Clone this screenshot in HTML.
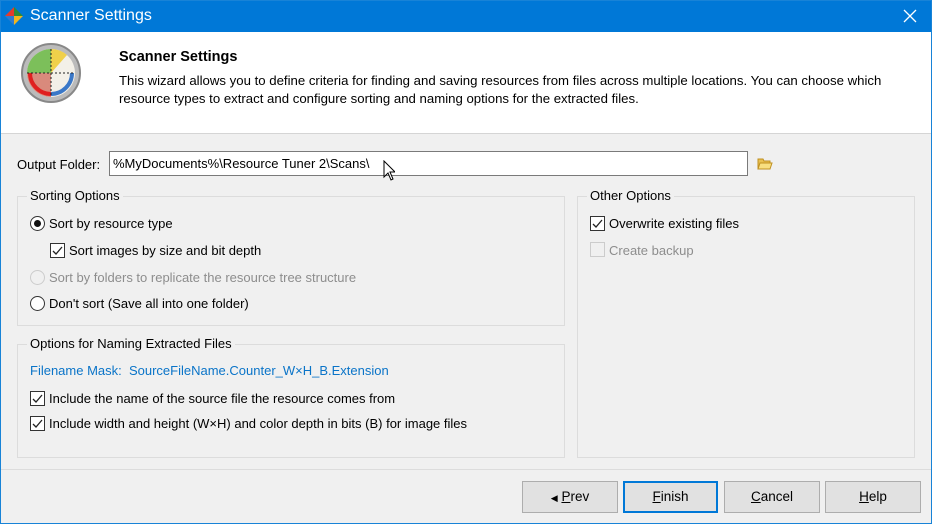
<!DOCTYPE html>
<html><head><style>
*{box-sizing:border-box;margin:0;padding:0}
body{width:932px;height:524px;background:#f0f0f0;font-family:"Liberation Sans",sans-serif;font-size:13px;color:#000;position:relative;overflow:hidden}
.a{position:absolute;white-space:nowrap}
.win{position:absolute;left:0;top:0;width:932px;height:524px;border:1px solid #1883d7}
.title{position:absolute;left:0;top:0;width:932px;height:32px;background:#0078d7;color:#fff;font-size:16px}
.hdr{position:absolute;left:1px;top:32px;width:930px;height:102px;background:#fff;border-bottom:1px solid #d5d5d5}
.grp{position:absolute;border:1px solid #dcdcdc}
.gl{position:absolute;background:#f0f0f0;padding:0 3px;top:-9px;left:9px}
.cb{position:absolute;width:15px;height:15px;border:1px solid #333;background:#fff}
.cb svg{position:absolute;left:1px;top:1px}
.rb{position:absolute;width:15px;height:15px;border:1px solid #333;border-radius:50%;background:#fff}
.btn{position:absolute;top:481px;height:32px;border:1px solid #adadad;background:#e1e1e1;text-align:center;line-height:30px;font-size:13.5px}
</style></head><body>
<div class="title">
<svg class="a" style="left:5px;top:7px" width="18" height="18" viewBox="0 0 18 18"><path d="M9 0L0 9h9z" fill="#e53a2c"/><path d="M9 0l9 9H9z" fill="#2e8b3a"/><path d="M0 9l9 9V9z" fill="#2f7ad0"/><path d="M18 9l-9 9V9z" fill="#f2b71d"/></svg>
<span class="a" style="left:30px;top:7px">Scanner Settings</span>
<svg class="a" style="left:903px;top:9px" width="14" height="14"><path d="M1 1l12 12M13 1L1 13" stroke="#fff" stroke-width="1.3"/></svg>
</div>
<div class="hdr">
<svg class="a" style="left:19px;top:10px" width="62" height="62" viewBox="0 0 62 62"><circle cx="31" cy="31" r="29" fill="#bbb" stroke="#888" stroke-width="2"/><circle cx="31" cy="31" r="24" fill="#f3f0e8"/><path d="M31 31V7A24 24 0 0 0 7 31z" fill="#7cbf5a"/><path d="M31 31V7A24 24 0 0 1 47 13z" fill="#f0d04a"/><path d="M31 31H7A24 24 0 0 0 31 55z" fill="#d98a7c"/><path d="M10 31a21 21 0 0 0 21 21" fill="none" stroke="#e02020" stroke-width="4"/><path d="M31 52a21 21 0 0 0 21-21" fill="none" stroke="#3a78c8" stroke-width="4"/><path d="M31 7v48M7 31h48" stroke="#222" stroke-dasharray="2 2"/></svg>
<span class="a" style="left:118px;top:17px;font-weight:bold;font-size:14.5px">Scanner Settings</span>
<span class="a" style="left:118px;top:40px;line-height:18px;font-size:13.2px">This wizard allows you to define criteria for finding and saving resources from files across multiple locations. You can choose which<br>resource types to extract and configure sorting and naming options for the extracted files.</span>
</div>
<div class="win"></div>
<span class="a" style="left:17px;top:157px">Output Folder:</span>
<div class="a" style="left:109px;top:151px;width:639px;height:25px;background:#fff;border:1px solid #7a7a7a;padding:4px 3px">%MyDocuments%\Resource Tuner 2\Scans\</div>
<svg class="a" style="left:757px;top:157px" width="16" height="14" viewBox="0 0 16 14"><path d="M1 2h5l1 2h6v8H1z" fill="#e8c050" stroke="#c09020"/><path d="M3 6h12l-2 6H1z" fill="#f8df80" stroke="#c09020"/></svg>
<svg class="a" style="left:383px;top:160px" width="12" height="22" viewBox="0 0 12 22"><path d="M1 1v16l4-4 3 7 2-1-3-7h5z" fill="#fff" stroke="#000"/></svg>

<div class="grp" style="left:17px;top:196px;width:548px;height:130px"><span class="gl">Sorting Options</span></div>
<div class="rb" style="left:30px;top:216px"><div style="position:absolute;left:3px;top:3px;width:7px;height:7px;border-radius:50%;background:#111"></div></div>
<span class="a" style="left:49px;top:216px">Sort by resource type</span>
<div class="cb" style="left:50px;top:243px"><svg width="11" height="11"><path d="M1 6l3 3 6-7" fill="none" stroke="#222" stroke-width="1.3"/></svg></div>
<span class="a" style="left:69px;top:243px">Sort images by size and bit depth</span>
<div class="rb" style="left:30px;top:270px;border-color:#ccc;background:#f0f0f0"></div>
<span class="a" style="left:49px;top:270px;color:#8d8d8d">Sort by folders to replicate the resource tree structure</span>
<div class="rb" style="left:30px;top:296px"></div>
<span class="a" style="left:49px;top:296px">Don't sort (Save all into one folder)</span>

<div class="grp" style="left:17px;top:344px;width:548px;height:114px"><span class="gl">Options for Naming Extracted Files</span></div>
<span class="a" style="left:30px;top:363px;color:#0a74c8">Filename Mask:&nbsp; SourceFileName.Counter_W×H_B.Extension</span>
<div class="cb" style="left:30px;top:391px"><svg width="11" height="11"><path d="M1 6l3 3 6-7" fill="none" stroke="#222" stroke-width="1.3"/></svg></div>
<span class="a" style="left:49px;top:391px">Include the name of the source file the resource comes from</span>
<div class="cb" style="left:30px;top:416px"><svg width="11" height="11"><path d="M1 6l3 3 6-7" fill="none" stroke="#222" stroke-width="1.3"/></svg></div>
<span class="a" style="left:49px;top:416px">Include width and height (W×H) and color depth in bits (B) for image files</span>

<div class="grp" style="left:577px;top:196px;width:338px;height:262px"><span class="gl">Other Options</span></div>
<div class="cb" style="left:590px;top:216px"><svg width="11" height="11"><path d="M1 6l3 3 6-7" fill="none" stroke="#222" stroke-width="1.3"/></svg></div>
<span class="a" style="left:609px;top:216px">Overwrite existing files</span>
<div class="cb" style="left:590px;top:242px;border-color:#ccc;background:#f0f0f0"></div>
<span class="a" style="left:609px;top:243px;color:#8d8d8d">Create backup</span>

<div class="a" style="left:1px;top:469px;width:930px;height:1px;background:#dcdcdc"></div>
<div class="btn" style="left:522px;width:96px"><span style="font-size:9px">◀</span> <u>P</u>rev</div>
<div class="btn" style="left:623px;width:95px;border:2px solid #0078d7;line-height:28px"><u>F</u>inish</div>
<div class="btn" style="left:724px;width:96px"><u>C</u>ancel</div>
<div class="btn" style="left:825px;width:96px"><u>H</u>elp</div>
</body></html>
